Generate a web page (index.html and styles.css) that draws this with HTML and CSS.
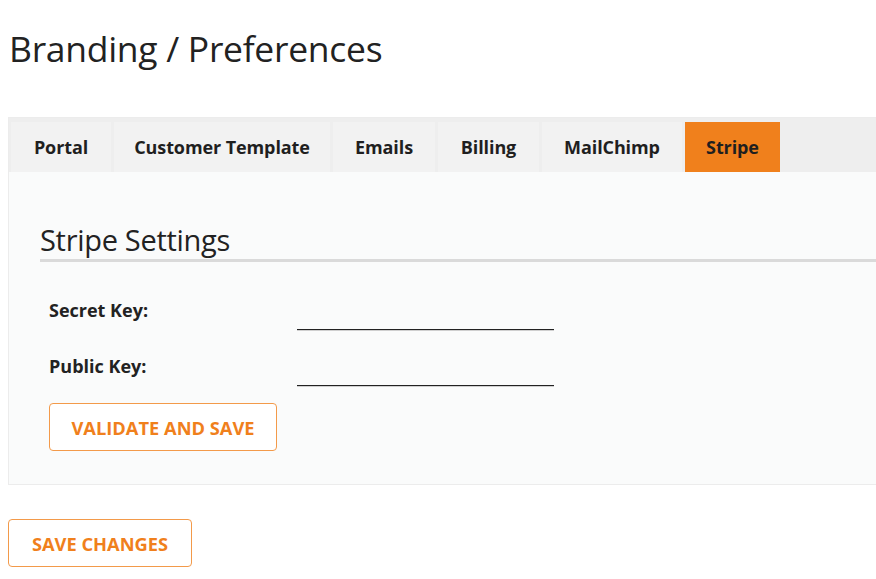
FILE: index.html
```html
<!DOCTYPE html>
<html>
<head>
<meta charset="utf-8">
<link rel="stylesheet" href="styles.css">
</head>
<body>
<div class="page">
  <h1 class="title">Branding / Preferences</h1>
  <div class="panel">
    <div class="tabs">
      <div class="tab tab-portal">Portal</div>
      <div class="tab tab-template">Customer Template</div>
      <div class="tab tab-emails">Emails</div>
      <div class="tab tab-billing">Billing</div>
      <div class="tab tab-mailchimp">MailChimp</div>
      <div class="tab tab-stripe active">Stripe</div>
    </div>
    <div class="body">
      <h2 class="section">Stripe Settings</h2>
      <div class="row">
        <label class="label">Secret Key:</label>
        <span class="input"></span>
      </div>
      <div class="row">
        <label class="label">Public Key:</label>
        <span class="input"></span>
      </div>
      <button class="btn validate">VALIDATE AND SAVE</button>
    </div>
  </div>
  <button class="btn save">SAVE CHANGES</button>
</div>
</body>
</html>
```
FILE: styles.css
```css
html, body {
  margin: 0;
  padding: 0;
  background: #ffffff;
  overflow: hidden;
}
body {
  font-family: "Open Sans", Lato, sans-serif;
  color: #222222;
}
.page {
  padding: 0 0 0 8px;
  width: 900px;
}
.title {
  margin: 0;
  padding: 24px 0 0 1px;
  height: 117px;
  box-sizing: border-box;
  font-size: 35.5px;
  font-weight: 400;
  line-height: 48px;
  color: #222;
  letter-spacing: -0.3px;
}
.panel {
  border: 1px solid #ececec;
  border-right: none;
  background: #fafbfb;
  height: 368px;
  box-sizing: border-box;
}
.tabs {
  display: flex;
  gap: 3px;
  background: #eeeeee;
  padding: 4px 0 0 2px;
  height: 54px;
  box-sizing: border-box;
}
.tab {
  background: #f2f2f2;
  text-align: center;
  font-size: 18px;
  font-weight: 700;
  line-height: 50px;
  height: 50px;
  color: #1f1f1f;
  letter-spacing: -0.1px;
}
.tab-portal { width: 100px; }
.tab-template { width: 216px; }
.tab-emails { width: 102px; }
.tab-billing { width: 101px; }
.tab-mailchimp { width: 140px; }
.tab-stripe { width: 95px; }
.tab.active {
  background: #f0801c;
}
.body {
  padding: 51px 0 0 31px;
}
.section {
  margin: 0;
  font-size: 29px;
  font-weight: 400;
  line-height: 34px;
  color: #222;
  padding: 0 0 2px 0;
  border-bottom: 3px solid #dadada;
  letter-spacing: -0.3px;
}
.row {
  display: flex;
  align-items: flex-end;
  height: 56px;
  padding-left: 9px;
}
.row:first-of-type {
  height: 68px;
}
.label {
  width: 248px;
  font-size: 18px;
  font-weight: 700;
  line-height: 20px;
  padding-bottom: 10px;
}
.input {
  display: block;
  width: 257px;
  height: 0;
  border-bottom: 1px solid #222;
  box-shadow: 0 1px 0 #cfcfcf;
}
.btn {
  display: block;
  background: #fff;
  border: 1px solid #f39a4a;
  border-radius: 4px;
  color: #f0801c;
  font-family: "Open Sans", Lato, sans-serif;
  font-weight: 700;
  font-size: 18.3px;
  height: 48px;
  padding: 0;
  cursor: pointer;
}
.validate {
  margin: 17px 0 0 9px;
  width: 228px;
}
.save {
  margin-top: 34px;
  width: 184px;
}
```
